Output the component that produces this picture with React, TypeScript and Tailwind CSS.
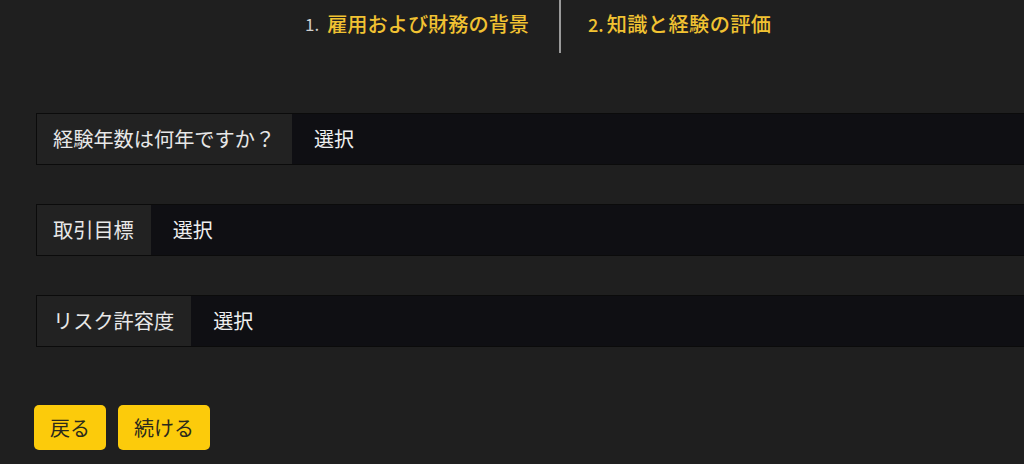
import React from 'react';

const fields = [
  { label: '経験年数は何年ですか？', value: '選択' },
  { label: '取引目標', value: '選択' },
  { label: 'リスク許容度', value: '選択' },
];

export default function App() {
  return (
    <div
      className="w-full h-[464px] overflow-hidden bg-[#1f1f1f] text-[#e6e6e6]"
      style={{ fontFamily: '"Noto Sans CJK JP", "Noto Sans", sans-serif' }}
    >
      {/* step header */}
      <div className="flex h-[53px] pl-[274px]">
        <div className="flex items-center pl-[31px] pr-[30px] pb-[5px]">
          <span className="text-[#cfcfcf] text-[17px] mr-[8px]">1.</span>
          <span className="text-[#f1c232] text-[20.2px] font-medium">雇用および財務の背景</span>
        </div>
        <div className="w-[2px] bg-[#9a9a9a]" />
        <div className="flex items-center pl-[27px] pb-[5px]">
          <span className="text-[#f1c232] text-[18px] mr-[3px] font-medium">2.</span>
          <span className="text-[#f1c232] text-[20.2px] tracking-[0.4px] font-medium">知識と経験の評価</span>
        </div>
      </div>

      {/* form fields */}
      <div className="flex flex-col gap-[39px] pl-[36px] pt-[60px]">
        {fields.map((f, i) => (
          <div key={i} className="flex w-[1040px] h-[52px] border border-[#0b0b0b]">
            <div className="flex items-center pl-4 pr-[17px] bg-[#222222] text-[20.2px] text-[#e8e8e8] whitespace-nowrap">
              {f.label}
            </div>
            <div className="flex-1 flex items-center pl-[22px] bg-[#0f0f13] text-[20px] text-[#f0f0f0]">
              {f.value}
            </div>
          </div>
        ))}
      </div>

      {/* actions */}
      <div className="flex gap-3 pl-[34px] pt-[58px]">
        <button className="h-[45px] px-4 rounded-[5px] bg-[#fccb0b] text-[#2b2a1c] text-[20px]">
          戻る
        </button>
        <button className="h-[45px] px-4 rounded-[5px] bg-[#fccb0b] text-[#2b2a1c] text-[20px]">
          続ける
        </button>
      </div>
    </div>
  );
}
